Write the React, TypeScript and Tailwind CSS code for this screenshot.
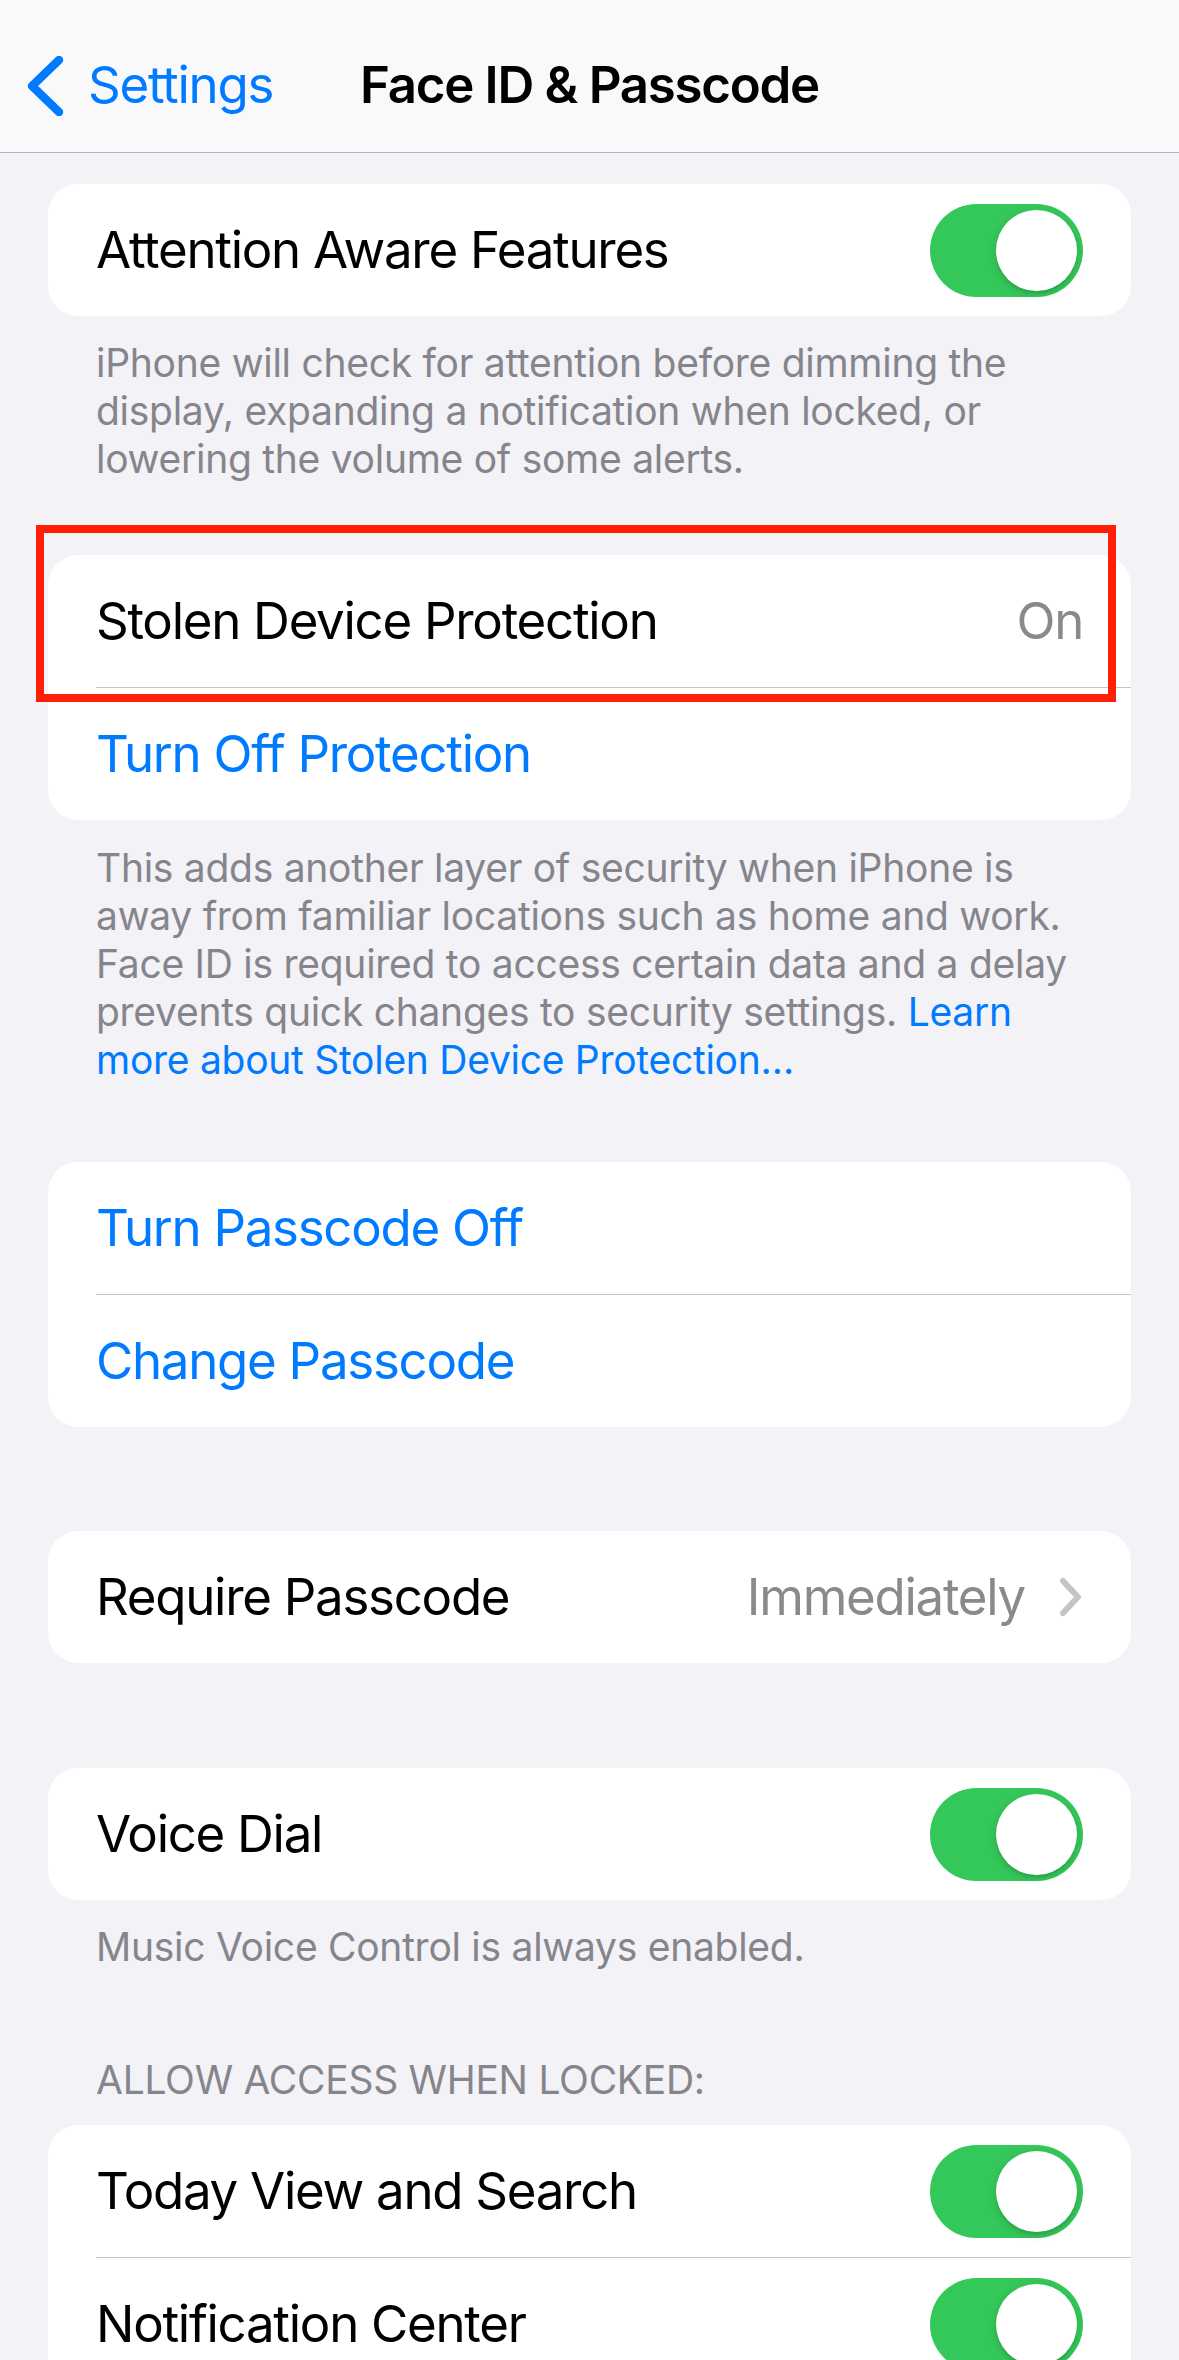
import React from "react";

function Toggle() {
    return (
        <div className="flex h-[93px] w-[153px] shrink-0 items-center justify-end rounded-full bg-[#34c759] p-[6px]">
            <div className="h-[81px] w-[81px] rounded-full bg-white shadow-[0_3px_8px_rgba(0,0,0,0.15),0_3px_1px_rgba(0,0,0,0.06)]" />
        </div>
    );
}

function Row({ children, right }: { children: React.ReactNode; right?: React.ReactNode }) {
    return (
        <div className="flex h-[132px] items-center justify-between px-[48px]">
            <div className="whitespace-nowrap">{children}</div>
            {right}
        </div>
    );
}

function Sep() {
    return <div className="ml-[48px] h-px bg-[#c6c6c8]" />;
}

function Card({ children, className = "" }: { children: React.ReactNode; className?: string }) {
    return <div className={"relative mx-[48px] overflow-visible rounded-[30px] bg-white " + className}>{children}</div>;
}

function Footer({ children, className = "" }: { children: React.ReactNode; className?: string }) {
    return (
        <div className={"px-[96px] pt-[23px] text-[39px] leading-[48px] tracking-[-0.007em] whitespace-nowrap text-[#85858b] " + className}>
            {children}
        </div>
    );
}

export default function App() {
    return (
        <div className="h-[2360px] w-[1179px] overflow-hidden bg-[#f2f2f7] text-[51px] tracking-[-0.025em] text-black [font-family:Inter,'Noto_Sans',sans-serif]">
            {/* nav bar */}
            <div className="grid h-[153px] grid-cols-[1fr_auto_1fr] items-center border-b border-[#b3b3b6] bg-[#f9f9fb] pt-[19px]">
                <div className="flex items-center pl-[26px] text-[#007aff]">
                    <svg width="38" height="60" viewBox="0 0 38 60" fill="none">
                        <path d="M33 4 L6 30 L33 56" stroke="#007aff" strokeWidth="8.5" strokeLinecap="round" strokeLinejoin="round" />
                    </svg>
                    <span className="ml-[24px]">Settings</span>
                </div>
                <div className="font-semibold">Face ID &amp; Passcode</div>
                <div />
            </div>

            <Card className="mt-[31px]">
                <Row right={<Toggle />}>Attention Aware Features</Row>
            </Card>
            <Footer>
                iPhone will check for attention before dimming the
                <br />
                display, expanding a notification when locked, or
                <br />
                lowering the volume of some alerts.
            </Footer>

            <Card className="mt-[72px]">
                {/* annotation box */}
                <div className="pointer-events-none absolute left-[-12px] top-[-30px] z-10 h-[177px] w-[1080px] border-[8px] border-[#fe1f06]" />
                <Row right={<span className="text-[#8a8a8e]">On</span>}>Stolen Device Protection</Row>
                <Sep />
                <Row>
                    <span className="text-[#007aff]">Turn Off Protection</span>
                </Row>
            </Card>
            <Footer className="pt-[24px]">
                This adds another layer of security when iPhone is
                <br />
                away from familiar locations such as home and work.
                <br />
                Face ID is required to access certain data and a delay
                <br />
                prevents quick changes to security settings. <span className="text-[#007aff]">Learn</span>
                <br />
                <span className="text-[#007aff]">more about Stolen Device Protection…</span>
            </Footer>

            <Card className="mt-[78px]">
                <Row>
                    <span className="text-[#007aff]">Turn Passcode Off</span>
                </Row>
                <Sep />
                <Row>
                    <span className="text-[#007aff]">Change Passcode</span>
                </Row>
            </Card>

            <Card className="mt-[104px]">
                <Row
                    right={
                        <div className="flex items-center gap-[34px] text-[#8a8a8e]">
                            <span>Immediately</span>
                            <svg width="24" height="40" viewBox="0 0 24 40" fill="none">
                                <path d="M4 4 L19 20 L4 36" stroke="#c4c4c7" strokeWidth="6" strokeLinecap="round" strokeLinejoin="round" />
                            </svg>
                        </div>
                    }
                >
                    Require Passcode
                </Row>
            </Card>

            <Card className="mt-[105px]">
                <Row right={<Toggle />}>Voice Dial</Row>
            </Card>
            <Footer>Music Voice Control is always enabled.</Footer>

            <div className="px-[96px] pt-[85px] text-[39px] leading-[48px] tracking-[-0.007em] text-[#85858b]">
                ALLOW ACCESS WHEN LOCKED:
            </div>

            <Card className="mt-[21px]">
                <Row right={<Toggle />}>Today View and Search</Row>
                <Sep />
                <Row right={<Toggle />}>Notification Center</Row>
                <Sep />
                <Row right={<Toggle />}>Control Center</Row>
            </Card>
        </div>
    );
}
